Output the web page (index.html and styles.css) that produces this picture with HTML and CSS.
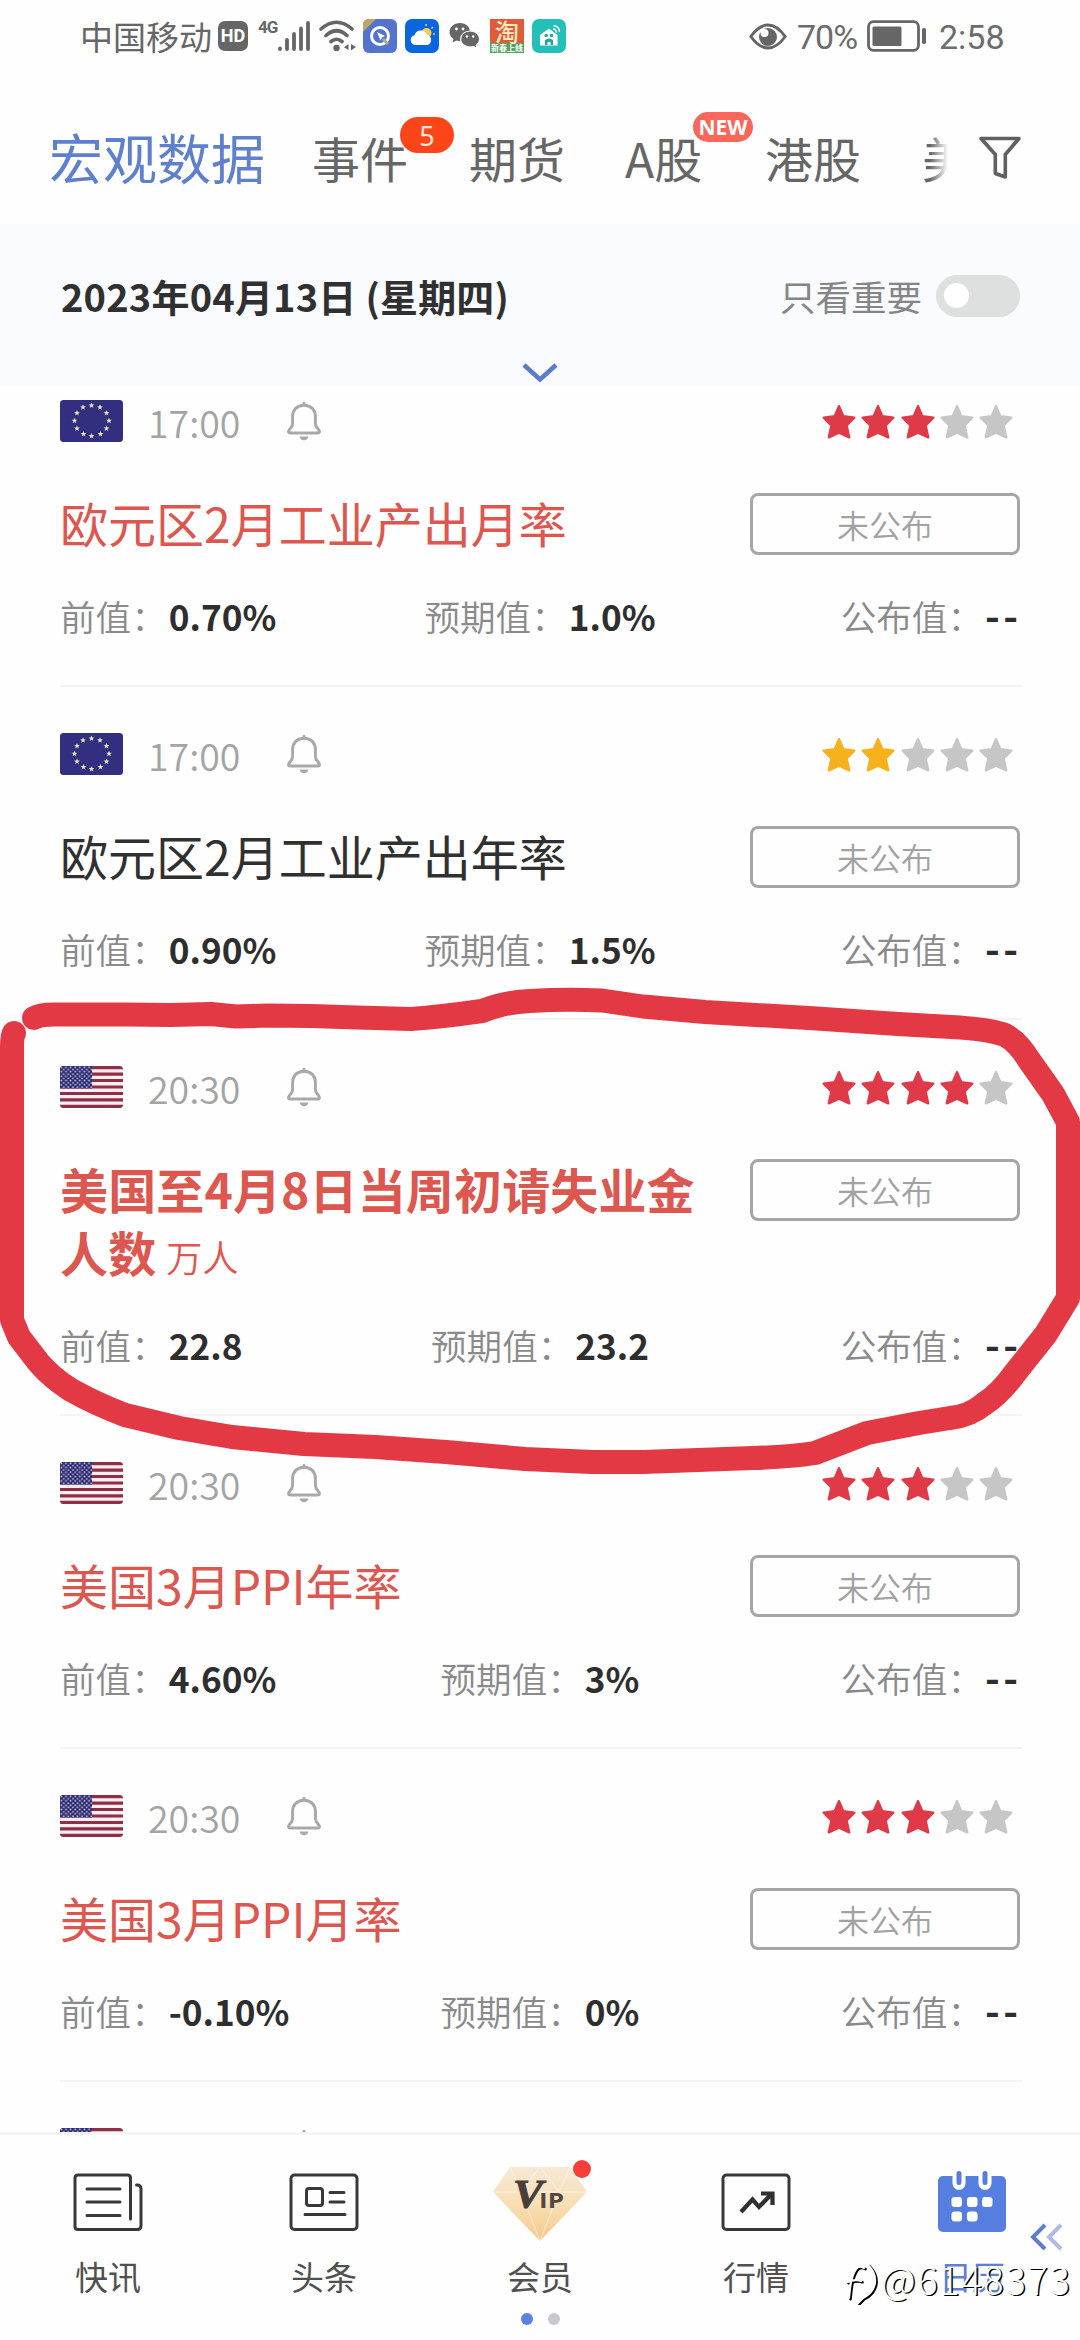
FILE: index.html
```html
<!DOCTYPE html>
<html lang="zh-CN">
<head>
<meta charset="utf-8">
<title>财经日历</title>
<link rel="stylesheet" href="styles.css">
</head>
<body>
<svg class="defs" width="0" height="0" aria-hidden="true">
  <defs>
    <symbol id="star" viewBox="0 0 34 34"><path d="M17 1.2 L21.3 11.3 L32.3 12.6 L24.6 20.4 L27.2 32.3 L17 27.6 L6.8 32.3 L9.4 20.4 L1.7 12.6 L12.7 11.3Z" fill="currentColor" stroke="currentColor" stroke-width="2.400" stroke-linejoin="round"/></symbol>
    <symbol id="bell" viewBox="0 0 36 40"><path d="M18 2.2v2M18 4.2C11 4.2 6.6 9 6.6 15.500V22.500Q6.600 25.500 3.600 28.300Q1.200 32 4.400 32H31.600Q34.800 32 32.400 28.300Q29.400 25.500 29.400 22.500V15.500C29.400 9 25 4.200 18 4.200Z" fill="none" stroke="#a9a9a9" stroke-width="3" stroke-linecap="round" stroke-linejoin="round"/><path d="M13.500 35.500h9q-1 3.800-4.500 3.800t-4.500-3.800z" fill="#a9a9a9"/></symbol>
    <polygon id="es" points="0,-3 .8,-1 2.900,-.9 1.200,.4 1.800,2.500 0,1.300 -1.800,2.500 -1.200,.4 -2.900,-.9 -.8,-1" fill="#e9e6b4"/>
    <symbol id="eu" viewBox="0 0 63 42"><rect width="63" height="42" rx="3.500" fill="#322f80"/>
      <use href="#es" x="31.500" y="5.500"/><use href="#es" x="40" y="7.300"/><use href="#es" x="46.500" y="13"/><use href="#es" x="49" y="20.700"/><use href="#es" x="46.500" y="28.500"/><use href="#es" x="40.500" y="34"/><use href="#es" x="31.500" y="36"/><use href="#es" x="23.500" y="34"/><use href="#es" x="17" y="28.500"/><use href="#es" x="14.500" y="20.700"/><use href="#es" x="17" y="13"/><use href="#es" x="23" y="7.300"/></symbol>
    <pattern id="dots" width="4.600" height="4.400" patternUnits="userSpaceOnUse"><circle cx="1.400" cy="1.400" r=".85" fill="#d9d7ec"/><circle cx="3.700" cy="3.600" r=".85" fill="#d9d7ec"/></pattern>
    <clipPath id="fc"><rect width="63" height="42" rx="3.500"/></clipPath>
    <symbol id="us" viewBox="0 0 63 42"><g clip-path="url(#fc)"><rect width="63" height="42" fill="#fbeef2"/><path d="M0 1.600h63M0 8.100h63M0 14.500h63M0 21h63M0 27.500h63M0 33.900h63M0 40.400h63" stroke="#8e2f46" stroke-width="3.230"/><rect width="32" height="22.500" fill="#2e2d72"/><rect width="32" height="22.500" fill="url(#dots)"/></g></symbol>
  </defs>
</svg>

<div class="screen">
  <header class="status">
    <span class="carrier">中国移动</span>
    <span class="hd">HD</span>
    <span class="net">4G</span>
    <svg class="signal" width="32" height="30" viewBox="0 0 32 30"><path d="M2 27.500v.5M9 19v9M16 13v15M23 7.500v20.500M30 2v26" stroke="#666" stroke-width="3.800" stroke-linecap="round"/></svg>
    <svg class="wifi" width="38" height="32" viewBox="0 0 38 32"><g fill="none" stroke="#666" stroke-width="3.600" stroke-linecap="round"><path d="M2 9Q17.500-4.500 33 9M7 15.500Q17.500 6 28 15.500M12 21.500Q17.500 17 23 21.500"/></g><circle cx="17.500" cy="28" r="3.200" fill="#666"/><path d="M29.500 24v6l-4.500-2.800zM32 24v6.500l5-3.500z" fill="#666"/></svg>
    <svg class="app" width="34" height="34" viewBox="0 0 34 34"><rect width="34" height="34" rx="6" fill="#5373cd"/><path d="M0 6q0-6 6-6h7L0 13z" fill="#bda768"/><circle cx="17" cy="17" r="8.500" fill="none" stroke="#fff" stroke-width="3"/><path d="M14 13l8 4-3 1.500-1.500 3z" fill="#fff"/><path d="M20 20l5 5" stroke="#b5a994" stroke-width="3"/></svg>
    <svg class="app" width="34" height="34" viewBox="0 0 34 34"><rect width="34" height="34" rx="7" fill="#0966dd"/><circle cx="21.500" cy="14" r="5" fill="#f5cf52"/><path d="M21 5v2M28 8l-1.500 1.500M30 15h-2" stroke="#f5cf52" stroke-width="1.500"/><path d="M10 26a5 5 0 0 1-.5-9.800 6.500 6.500 0 0 1 12.500-.2 5.100 5.100 0 0 1 0 10z" fill="#fff"/></svg>
    <svg class="wechat" width="31" height="28" viewBox="0 0 31 28"><path d="M11 1C5 1 .5 5 .5 10c0 3 1.500 5.300 4 7l-1 3.500 4-2c1.500.4 3 .5 4 .5C17 19 21 15 21 10S17 1 11 1z" fill="#666"/><path d="M21 9c5.500 0 9.700 3.700 9.700 8.200 0 2.500-1.200 4.600-3.400 6.200l.8 3-3.500-1.800c-6.500 1.500-13-1.800-13-7.400C11.600 12.700 15.500 9 21 9z" fill="#666" stroke="#fff" stroke-width="1.200"/><g fill="#fff"><circle cx="7.500" cy="7" r="1.400"/><circle cx="14" cy="7" r="1.400"/><circle cx="18" cy="14.500" r="1.200"/><circle cx="24.200" cy="14.500" r="1.200"/></g></svg>
    <span class="tao"><b>淘</b><i>新春上线</i></span>
    <svg class="app" width="34" height="34" viewBox="0 0 34 34"><rect width="34" height="34" rx="7" fill="#25bfba"/><path d="M8 16l9-6.500 8.500 6.500v10.500H8z" fill="#fff"/><circle cx="14.200" cy="16.500" r="1.800" fill="#25a5a0"/><circle cx="19.500" cy="16.500" r="1.800" fill="#25a5a0"/><path d="M13 26v-5q4-3 8 0v5h-2.500v-3h-3v3z" fill="#25a5a0"/><path d="M21 10q3 0 3.500 3.500M21.500 6.800q5.500.2 6 6" fill="none" stroke="#fff" stroke-width="1.400"/></svg>
    <svg class="eye" width="38" height="27" viewBox="0 0 38 27"><path d="M1.800 13.500Q10 2 19 2t17.200 11.500Q28 25 19 25T1.800 13.500z" fill="none" stroke="#666" stroke-width="3" stroke-linejoin="round"/><circle cx="19" cy="14" r="9" fill="#666"/><circle cx="15.500" cy="10" r="4" fill="#fff"/></svg>
    <span class="pct">70%</span>
    <svg class="battery" width="60" height="32" viewBox="0 0 60 32"><rect x="1.500" y="1.700" width="50" height="28.600" rx="5" fill="none" stroke="#666" stroke-width="2.800"/><rect x="5.500" y="6.500" width="29" height="19.500" rx="1.500" fill="#666"/><rect x="55" y="8" width="4" height="16" rx="1.800" fill="#666"/></svg>
    <span class="clock">2:58</span>
  </header>

  <nav class="tabs">
    <span class="tab tab-active">宏观数据</span>
    <span class="tab t-event">事件<em class="badge">5</em></span>
    <span class="tab t-fut">期货</span>
    <span class="tab t-a">A股<em class="badge badge-new">NEW</em></span>
    <span class="tab t-hk">港股</span>
    <span class="tab t-us">美股</span>
    <svg class="filter" width="42" height="44" viewBox="0 0 42 44"><path d="M2 2.500H40L26.300 18.500V41L16.300 37.500V18.500Z" fill="none" stroke="#606060" stroke-width="3.600" stroke-linejoin="round"/></svg>
  </nav>

  <section class="datebar">
    <div class="daterow">
      <strong class="date">2023年04月13日 (星期四)</strong>
      <span class="only">只看重要</span>
      <span class="toggle"></span>
    </div>
    <svg class="chev" width="36" height="21" viewBox="0 0 36 21"><path d="M2 3L18 17.500L34 3" fill="none" stroke="#5b7ccb" stroke-width="4.600"/></svg>
  </section>

  <main class="list">
    <article class="item first">
      <div class="meta"><svg class="flag"><use href="#eu"/></svg><time>17:00</time><svg class="bell"><use href="#bell"/></svg>
        <div class="stars red"><svg><use href="#star"/></svg><svg><use href="#star"/></svg><svg><use href="#star"/></svg><svg class="off"><use href="#star"/></svg><svg class="off"><use href="#star"/></svg></div></div>
      <div class="main"><h2 class="hot">欧元区2月工业产出月率</h2><span class="state">未公布</span></div>
      <div class="vals"><div>前值：<b>0.70%</b></div><div>预期值：<b>1.0%</b></div><div>公布值：<b class="none">--</b></div></div>
    </article>
    <article class="item">
      <div class="meta"><svg class="flag"><use href="#eu"/></svg><time>17:00</time><svg class="bell"><use href="#bell"/></svg>
        <div class="stars gold"><svg><use href="#star"/></svg><svg><use href="#star"/></svg><svg class="off"><use href="#star"/></svg><svg class="off"><use href="#star"/></svg><svg class="off"><use href="#star"/></svg></div></div>
      <div class="main"><h2>欧元区2月工业产出年率</h2><span class="state">未公布</span></div>
      <div class="vals"><div>前值：<b>0.90%</b></div><div>预期值：<b>1.5%</b></div><div>公布值：<b class="none">--</b></div></div>
    </article>
    <article class="item">
      <div class="meta"><svg class="flag"><use href="#us"/></svg><time>20:30</time><svg class="bell"><use href="#bell"/></svg>
        <div class="stars red"><svg><use href="#star"/></svg><svg><use href="#star"/></svg><svg><use href="#star"/></svg><svg><use href="#star"/></svg><svg class="off"><use href="#star"/></svg></div></div>
      <div class="main"><h2 class="hot strong">美国至4月8日当周初请失业金人数 <small>万人</small></h2><span class="state">未公布</span></div>
      <div class="vals"><div>前值：<b>22.8</b></div><div>预期值：<b>23.2</b></div><div>公布值：<b class="none">--</b></div></div>
    </article>
    <article class="item">
      <div class="meta"><svg class="flag"><use href="#us"/></svg><time>20:30</time><svg class="bell"><use href="#bell"/></svg>
        <div class="stars red"><svg><use href="#star"/></svg><svg><use href="#star"/></svg><svg><use href="#star"/></svg><svg class="off"><use href="#star"/></svg><svg class="off"><use href="#star"/></svg></div></div>
      <div class="main"><h2 class="hot">美国3月PPI年率</h2><span class="state">未公布</span></div>
      <div class="vals"><div>前值：<b>4.60%</b></div><div>预期值：<b>3%</b></div><div>公布值：<b class="none">--</b></div></div>
    </article>
    <article class="item">
      <div class="meta"><svg class="flag"><use href="#us"/></svg><time>20:30</time><svg class="bell"><use href="#bell"/></svg>
        <div class="stars red"><svg><use href="#star"/></svg><svg><use href="#star"/></svg><svg><use href="#star"/></svg><svg class="off"><use href="#star"/></svg><svg class="off"><use href="#star"/></svg></div></div>
      <div class="main"><h2 class="hot">美国3月PPI月率</h2><span class="state">未公布</span></div>
      <div class="vals"><div>前值：<b>-0.10%</b></div><div>预期值：<b>0%</b></div><div>公布值：<b class="none">--</b></div></div>
    </article>
    <article class="item">
      <div class="meta"><svg class="flag"><use href="#us"/></svg><time></time><svg class="bell"><use href="#bell"/></svg></div>
    </article>
  </main>

  <footer class="bottom">
    <div class="nav">
      <a><svg width="70" height="76" viewBox="0 0 70 76"><g fill="none" stroke="#383838" stroke-width="3" stroke-linecap="round" stroke-linejoin="round"><path d="M57.500 59V18q0-3-3-3H5q-3 0-3 3v48.500q0 3 3 3H64q4 0 4-4V29q0-4-4-4H63.500M14 29H47M14 42H47M14 55.500H47"/></g></svg><span>快讯</span></a>
      <a><svg width="70" height="76" viewBox="0 0 70 76"><g fill="none" stroke="#383838" stroke-width="3" stroke-linecap="round"><rect x="2" y="15" width="66" height="54.500" rx="3.500"/><rect x="17.500" y="28.500" width="16" height="17" rx="2.500"/><path d="M41 32.500H55M41 42H55M16 54.500H56"/></g></svg><span>头条</span></a>
      <a><svg class="vip" width="94" height="76" viewBox="0 0 94 76"><defs><linearGradient id="g" x2="0" y2="1"><stop offset="0" stop-color="#f5e9d6"/><stop offset=".5" stop-color="#f8dfb6"/><stop offset="1" stop-color="#f5c98a"/></linearGradient></defs><path d="M17 1H77L94 26L47 75L0 26Z" fill="url(#g)"/><path d="M0 26H94M17 1L28 26L47 75L66 26L77 1M28 26L47 1L66 26" fill="none" stroke="#fff6e6" stroke-opacity=".55" stroke-width="1.300"/><text class="vip-v" x="20" y="41" textLength="30" lengthAdjust="spacingAndGlyphs">V</text><text class="vip-ip" x="46" y="42" textLength="25" lengthAdjust="spacingAndGlyphs">IP</text></svg><span>会员</span><i class="reddot"></i></a>
      <a><svg width="70" height="76" viewBox="0 0 70 76"><rect x="2" y="15" width="66" height="54.500" rx="3.500" fill="none" stroke="#383838" stroke-width="3"/><path d="M20 52L31.500 39.500L38 47L51 33.500M40 33.500H51.500V45" fill="none" stroke="#303030" stroke-width="4.200"/></svg><span>行情</span></a>
      <a class="on"><svg width="70" height="76" viewBox="0 0 70 76"><rect x="1" y="16" width="68" height="56" rx="5" fill="#567ee0"/><g stroke-linecap="round"><path d="M22 15v8.500M48 15v8.500" stroke="#fff" stroke-width="13"/><path d="M22 13.500v9M48 13.500v9" stroke="#567ee0" stroke-width="5"/></g><g fill="#fff"><rect x="14.500" y="37" width="10.500" height="10" rx="3"/><rect x="30" y="37" width="10.500" height="10" rx="3"/><rect x="45" y="37" width="10.500" height="10" rx="3"/><rect x="14.500" y="51.500" width="10.500" height="10" rx="3"/><rect x="30" y="51.500" width="10.500" height="10" rx="3"/></g></svg><span>日历</span></a>
    </div>
    <div class="pager"><i></i><i></i></div>
    <svg class="back" width="34" height="28" viewBox="0 0 34 28"><path d="M15 2L3 14L15 26" fill="none" stroke="#5f7dc8" stroke-width="4"/><path d="M31 2L19 14L31 26" fill="none" stroke="#adbbdc" stroke-width="4"/></svg>
  </footer>

  <svg class="ink" width="1080" height="2340" viewBox="0 0 1080 2340"><path d="M34 1018Q40 1014.500 54 1014.500L125 1014.500L171 1015L211 1014L236 1016.500L268 1015.500L311 1016L357 1017.500L411 1019Q440 1017 482 1011Q505 1002 530 1001Q565 999 602 1000.500L643 1006.500L705 1012L809 1018L898 1024L960 1027.500Q992 1030 1005 1035Q1018 1042 1029 1060L1053 1094L1068 1122V1298L1046 1334L1015 1373Q1000 1394 984 1404Q970 1416 950 1418L919 1423L867 1433L815 1453Q790 1457 753 1458L643 1462H592L525 1459L446 1452L375 1447L304 1444L232 1437L179 1428L125 1415Q96 1404 71 1390Q52 1378 39 1363L19 1337L12 1320V1047Q12 1036 14 1033" fill="none" stroke="#e33945" stroke-width="24" stroke-linecap="round" stroke-linejoin="round"/></svg>

  <div class="watermark"><svg width="34" height="42" viewBox="0 0 34 42"><g fill="none" stroke-linecap="round"><path d="M5 35C6 24 7 13 12 6Q15 2 20 5M3 19Q12 16 17 18M24 2C35 13 33 28 19 35L14 40" stroke="#000" stroke-width="2.600" transform="translate(1.500 1.200)"/><path d="M5 35C6 24 7 13 12 6Q15 2 20 5M3 19Q12 16 17 18M24 2C35 13 33 28 19 35L14 40" stroke="#fff" stroke-width="2.200"/></g></svg><span>@6148373</span></div>
</div>
</body>
</html>
```

FILE: styles.css
```css
* { box-sizing: border-box; }
body {
  margin: 0;
  background: #fefefe;
  font-family: "Noto Sans CJK SC", "Noto Sans", sans-serif;
  color: #666;
}
svg { display: block; flex: none; }
.defs { position: absolute; }
.screen {
  position: relative;
  width: 1080px;
  height: 2340px;
  overflow: hidden;
  display: flex;
  flex-direction: column;
  background: #fefefe;
}

/* status bar */
.status { height: 72px; display: flex; align-items: center; padding-left: 80px; white-space: nowrap; flex: none; }
.carrier { font-size: 33px; line-height: 72px; width: 138px; }
.hd {
  width: 30px; height: 30px; border-radius: 7px; background: #666; color: #fff;
  font: 700 18px/30px Roboto, sans-serif; text-align: center;
}
.net { font: 700 17px/20px Roboto, sans-serif; letter-spacing: -1px; width: 20px; margin: -18px 0 0 10px; }
.signal { margin-left: 0; }
.wifi { margin: 0 0 0 9px; }
.app { margin-left: 6px; }
.app + .app { margin-left: 8px; }
.wechat { margin-left: 10px; }
.tao {
  width: 34px; height: 34px; margin-left: 10px; overflow: hidden;
  background: linear-gradient(#df5c3a 72%, #55a363 72%);
  color: #ffe9c0; display: flex; flex-direction: column; align-items: center;
}
.tao b { font-size: 24px; line-height: 24px; font-weight: 500; }
.tao i { font-size: 8px; line-height: 9px; font-style: normal; font-weight: 700; color: #fff; }
.tao + .app { margin-left: 8px; }
.eye { margin-left: 183px; }
.pct, .clock { font: 400 34px/72px Roboto, sans-serif; color: #6c6c6c; padding-top: 2px; }
.pct { margin-left: 10px; width: 70px; letter-spacing: -1px; }
.clock { margin-left: 12px; }

/* tabs */
.tabs { height: 152px; flex: none; display: flex; align-items: center; padding-left: 49px; }
.tab { font-size: 48px; line-height: 70px; margin-top: 17px; white-space: nowrap; position: relative; }
.tab-active { font-size: 54px; color: #5f80cd; width: 263px; }
.t-event { width: 157px; }
.t-fut { width: 156px; }
.t-a { width: 140px; }
.t-hk { width: 157px; }
.t-us {
  width: 26px; overflow: hidden; margin-right: 31px;
  -webkit-mask-image: linear-gradient(90deg, #000 30%, transparent);
  mask-image: linear-gradient(90deg, #000 30%, transparent);
}
.filter { margin-top: 20px; }
.badge {
  position: absolute; left: 88px; top: -5px; width: 54px; height: 36px; border-radius: 18px;
  background: #fd4519; color: #ffe9dc; font: 400 27px/37px "Noto Sans", sans-serif; text-align: center;
}
.badge-new { left: 68px; top: -10px; width: 60px; height: 30px; background: #fa6659; color: #fff; font: 700 21px/31px "Open Sans", sans-serif; }

/* date bar */
.datebar { height: 162px; flex: none; background: #f9fbff; display: flex; flex-direction: column; align-items: center; }
.daterow { width: 100%; height: 136px; padding: 7px 60px 0 61px; display: flex; align-items: center; }
.date { font-size: 38px; font-weight: 600; color: #303030; white-space: nowrap; letter-spacing: .2px; }
.only { margin-left: auto; font-size: 35.500px; color: #858585; }
.toggle { width: 84px; height: 42px; margin-left: 14px; border-radius: 21px; background: #dedfdf; display: flex; align-items: center; padding-left: 8px; }
.toggle::before { content: ""; width: 25px; height: 25px; border-radius: 50%; background: #fff; }
.chev { margin-top: 2px; }

/* list */
.list { height: 1746px; overflow: hidden; padding: 0 58px 0 60px; flex: none; }
.item { padding: 46px 2px 0 0; border-bottom: 2px solid #f4f4f5; }
.item.first { padding-top: 14px; }
.meta { height: 42px; display: flex; align-items: center; }
.flag { width: 63px; height: 42px; }
time { font-size: 37.500px; line-height: 42px; color: #a4a4a4; width: 138px; margin-left: 25px; padding-top: 1px; font-weight: 350; }
.bell { width: 36px; height: 40px; }
.stars { margin: 1px 7px 0 auto; display: flex; gap: 5.200px; }
.stars svg { width: 34px; height: 34px; }
.red { color: #e03a48; }
.gold { color: #f6b11d; }
.stars .off { color: #c6c6c6; }
.main { display: flex; justify-content: space-between; align-items: flex-start; padding-top: 51px; }
h2 { margin: -2px 0 2px; font-size: 48px; line-height: 63px; font-weight: 400; color: #303030; width: 650px; }
h2.hot { color: #dc574f; }
h2.strong { font-weight: 700; letter-spacing: .15px; }
h2 small { font-size: 36px; line-height: 36px; font-weight: 350; margin-left: -1px; }
.state {
  width: 270px; height: 62px; border: 3px solid #a6a6a6; border-radius: 8px; text-align: center;
  font-size: 32px; line-height: 56px; color: #a2a2a2; font-weight: 350;
}
.vals { display: grid; grid-template-columns: 1fr auto 1fr; padding-top: 35px; height: 129px; line-height: 50px; font-size: 35.600px; color: #8a8a8a; font-weight: 350; white-space: nowrap; }
.vals div:last-child { text-align: right; }
.vals b { font-size: 35.200px; font-weight: 700; color: #2e2e2e; margin-left: 2px; }
.vals .none { font-size: 40px; line-height: 40px; letter-spacing: 3.500px; display: inline-block; width: 35px; text-align: left; }

/* bottom bar */
.bottom { position: relative; flex: 1; border-top: 3px solid #f6f6f7; background: #fefefe; }
.nav { display: grid; grid-template-columns: repeat(5, 1fr); padding-top: 25px; }
.nav a { position: relative; display: flex; flex-direction: column; align-items: center; font-size: 33px; line-height: 40px; color: #505050; height: 140px; }
.nav span { margin-top: 20px; }
.nav .vip { margin-top: 6px; }
.nav .vip + span { margin-top: 14px; }
.nav .on { color: #5f80cd; }
.vip-v { font: italic 700 40px "Liberation Serif", serif; fill: #4a3d3a; stroke: #4a3d3a; stroke-width: 1; }
.vip-ip { font: 700 22px "Open Sans", sans-serif; fill: #55473f; }
.reddot { position: absolute; left: 141px; top: 0; width: 18px; height: 18px; border-radius: 50%; background: #f83e38; }
.pager { display: flex; justify-content: center; gap: 15px; margin-top: 13px; }
.pager i { width: 12px; height: 12px; border-radius: 50%; background: #5f80dc; }
.pager i + i { background: #c8c8d2; }
.back { position: absolute; left: 1030px; top: 88px; }

/* hand-drawn marker and watermark, over the page */
.ink { position: absolute; left: 0; top: 0; }
.watermark {
  position: absolute; left: 844px; top: 2263px; display: flex; align-items: flex-start;
  font: 300 38px/32px "Noto Sans CJK SC", sans-serif; color: #fff; text-shadow: 1.500px 1px 0 #000; white-space: nowrap;
}
.watermark span { margin-left: 3px; letter-spacing: 1.700px; }
```
